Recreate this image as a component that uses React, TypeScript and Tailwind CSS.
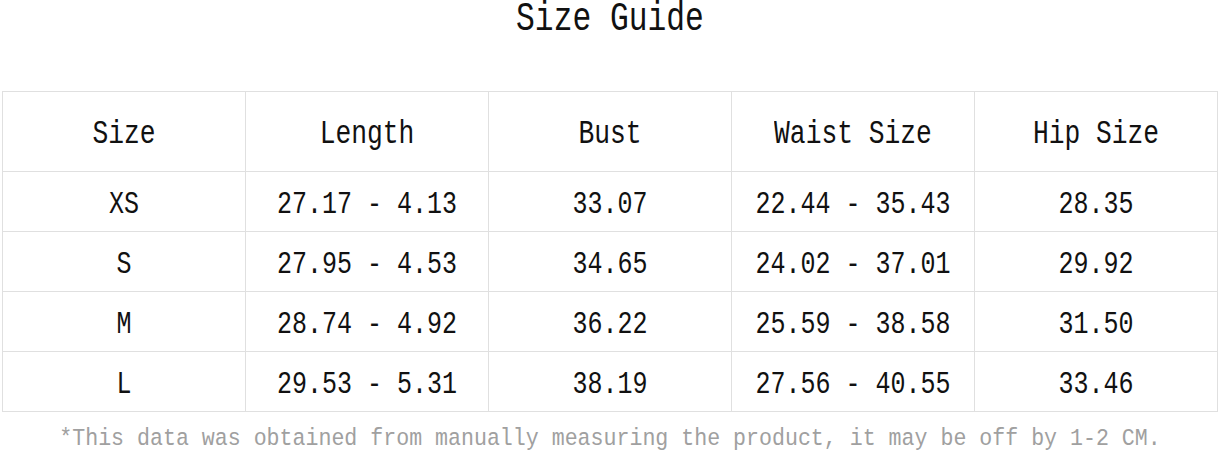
const headers = ["Size", "Length", "Bust", "Waist Size", "Hip Size"];

const rows = [
    ["XS", "27.17 - 4.13", "33.07", "22.44 - 35.43", "28.35"],
    ["S", "27.95 - 4.53", "34.65", "24.02 - 37.01", "29.92"],
    ["M", "28.74 - 4.92", "36.22", "25.59 - 38.58", "31.50"],
    ["L", "29.53 - 5.31", "38.19", "27.56 - 40.55", "33.46"],
];

export default function App() {
    return (
        <div className="h-[453px] w-[1220px] bg-white font-['Liberation_Mono',monospace] text-[#111]">
            <div className="flex h-[91px] justify-center">
                <h1 className="mt-[7px] inline-block h-[26px] scale-y-[1.3] text-[31.3px] leading-[26px] whitespace-pre">
                    Size Guide
                </h1>
            </div>

            <div className="ml-[2px] w-[1216px] border-t border-l border-[#e0e0e0]">
                <div className="grid h-[80px] grid-cols-5">
                    {headers.map((h) => (
                        <div
                            key={h}
                            className="flex items-center justify-center border-r border-b border-[#e0e0e0] pt-[6px]"
                        >
                            <span className="inline-block scale-y-[1.25] text-[26.3px] whitespace-pre">
                                {h}
                            </span>
                        </div>
                    ))}
                </div>
                {rows.map((row) => (
                    <div key={row[0]} className="grid h-[60px] grid-cols-5">
                        {row.map((cell, i) => (
                            <div
                                key={i}
                                className="flex items-center justify-center border-r border-b border-[#e0e0e0] pt-[7px]"
                            >
                                <span className="inline-block scale-y-[1.25] text-[25px] whitespace-pre">
                                    {cell}
                                </span>
                            </div>
                        ))}
                    </div>
                ))}
            </div>

            <div className="flex h-[41px] items-center justify-center pt-[12px]">
                <p className="inline-block scale-y-[1.1] text-[21.6px] whitespace-pre text-[#a0a0a0]">
                    *This data was obtained from manually measuring the product, it may be off by 1-2 CM.
                </p>
            </div>
        </div>
    );
}
